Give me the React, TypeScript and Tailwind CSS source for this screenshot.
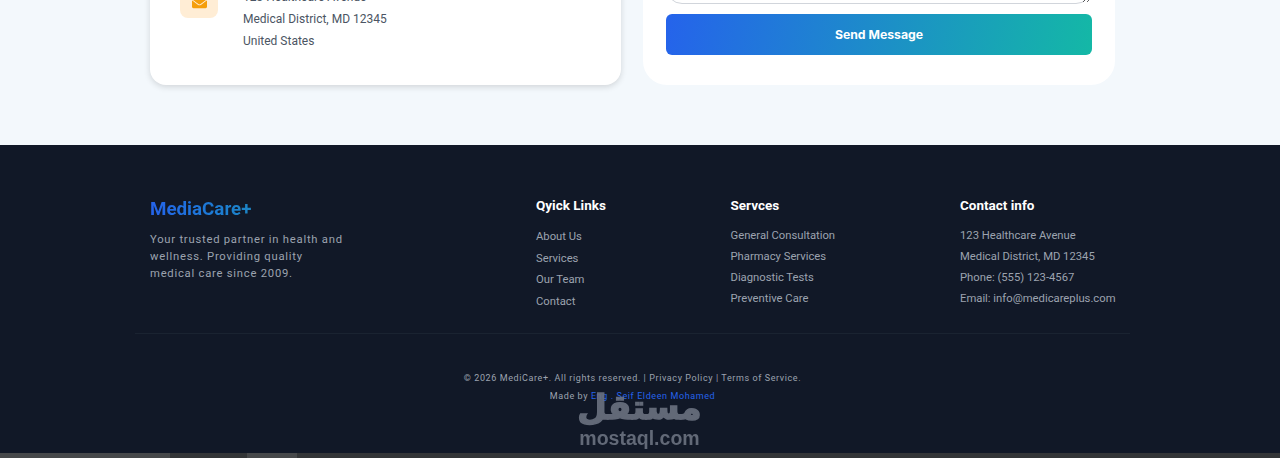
import { FaEnvelope } from "react-icons/fa";

const columns = [
  {
    title: "Qyick Links",
    width: "w-[194.5px]",
    gap: "gap-[21.8px]",
    top: "mt-[16.8px]",
    items: ["About Us", "Services", "Our Team", "Contact"],
  },
  {
    title: "Servces",
    width: "w-[229.5px]",
    gap: "gap-[21px]",
    top: "mt-[16px]",
    items: [
      "General Consultation",
      "Pharmacy Services",
      "Diagnostic Tests",
      "Preventive Care",
    ],
  },
  {
    title: "Contact info",
    width: "w-[170px]",
    gap: "gap-[21px]",
    top: "mt-[16px]",
    items: [
      "123 Healthcare Avenue",
      "Medical District, MD 12345",
      "Phone: (555) 123-4567",
      "Email: info@medicareplus.com",
    ],
  },
];

export default function App() {
  return (
    <div className="relative h-[458px] w-[1280px] overflow-hidden bg-[#f3f8fc] font-['Roboto',sans-serif]">
      <section className="flex h-[145px] items-end overflow-hidden pb-[60px] pl-[150px]">
        <div className="flex h-[300px] w-[471px] shrink-0 items-end gap-[25px] rounded-b-2xl bg-white px-[30px] pb-[33px] shadow-[0_2px_6px_rgba(0,0,0,0.14)]">
          <div className="mb-[34px] flex h-[32px] w-[38px] shrink-0 items-center justify-center rounded-lg bg-[#ffedd5] text-[15px] text-[#f59e0b]">
            <FaEnvelope />
          </div>
          <div className="text-[12px] leading-[22px] text-[#4b5563]">
            <p>123 Healthcare Avenue</p>
            <p>Medical District, MD 12345</p>
            <p>United States</p>
          </div>
        </div>
        <div className="ml-[22px] flex h-[300px] w-[472px] shrink-0 flex-col justify-end rounded-b-3xl bg-white px-[23px] pb-[30px]">
          <textarea
            readOnly
            className="mb-[10px] block h-[100px] w-full rounded-2xl border border-[#d1d5db] bg-white"
          />
          <button className="h-[41px] w-full rounded-md bg-[linear-gradient(100deg,#2563eb,#14b8a6)] pt-[1px] font-['Inter',sans-serif] text-[12.25px] font-bold text-white">
            Send Message
          </button>
        </div>
      </section>

      <footer className="h-[308px] bg-[#111827] pr-[150px] pl-[135px]">
        <div className="flex h-[188.5px] border-b border-[#1a2331] pt-[51px] pl-[15px]">
          <div className="w-[386px] shrink-0">
            <h2 className="w-fit bg-gradient-to-r from-[#2563eb] to-[#1d85c5] bg-clip-text text-[18.75px] leading-[26px] font-bold text-transparent">
              MediaCare+
            </h2>
            <p className="mt-[9px] text-[11.25px] leading-[17px] tracking-[0.76px] whitespace-nowrap text-[#9ca3af]">
              Your trusted partner in health and
              <br />
              wellness. Providing quality
              <br />
              medical care since 2009.
            </p>
          </div>
          {columns.map((col) => (
            <div key={col.title} className={`${col.width} shrink-0`}>
              <h3 className="text-[13.5px] leading-[18px] font-bold text-white">
                {col.title}
              </h3>
              <ul className={`${col.top} flex flex-col ${col.gap} pt-[6px] text-[11.25px] leading-[0px] text-[#9ca3af]`}>
                {col.items.map((item) => (
                  <li key={item} className="whitespace-nowrap">
                    {item}
                  </li>
                ))}
              </ul>
            </div>
          ))}
        </div>
        <div className="pt-[35px] text-center text-[9px] leading-[18px] tracking-[0.6px] text-[#9ca3af]">
          <p>© 2026 MediCare+. All rights reserved. | Privacy Policy | Terms of Service.</p>
          <p>
            Made by <span className="text-[#2563eb]">Eng . Seif Eldeen Mohamed</span>
          </p>
        </div>
      </footer>

      <div className="flex h-[5px] bg-[#333537]">
        <div className="w-[170px] bg-[#46484a]" />
        <div className="ml-[77px] w-[50px] bg-[#46484a]" />
      </div>

      {/* mostaql watermark */}
      <div className="absolute top-[388px] left-[579px] flex w-[121px] flex-col items-center text-[#6b7280] opacity-90">
        <span dir="rtl" className="font-['DejaVu_Sans',sans-serif] text-[34px] leading-[38px] font-bold [-webkit-text-stroke:1.5px_#6b7280]">
          مستقل
        </span>
        <span className="font-['Liberation_Sans',sans-serif] text-[19.5px] leading-[24px] font-bold">
          mostaql.com
        </span>
      </div>
    </div>
  );
}
